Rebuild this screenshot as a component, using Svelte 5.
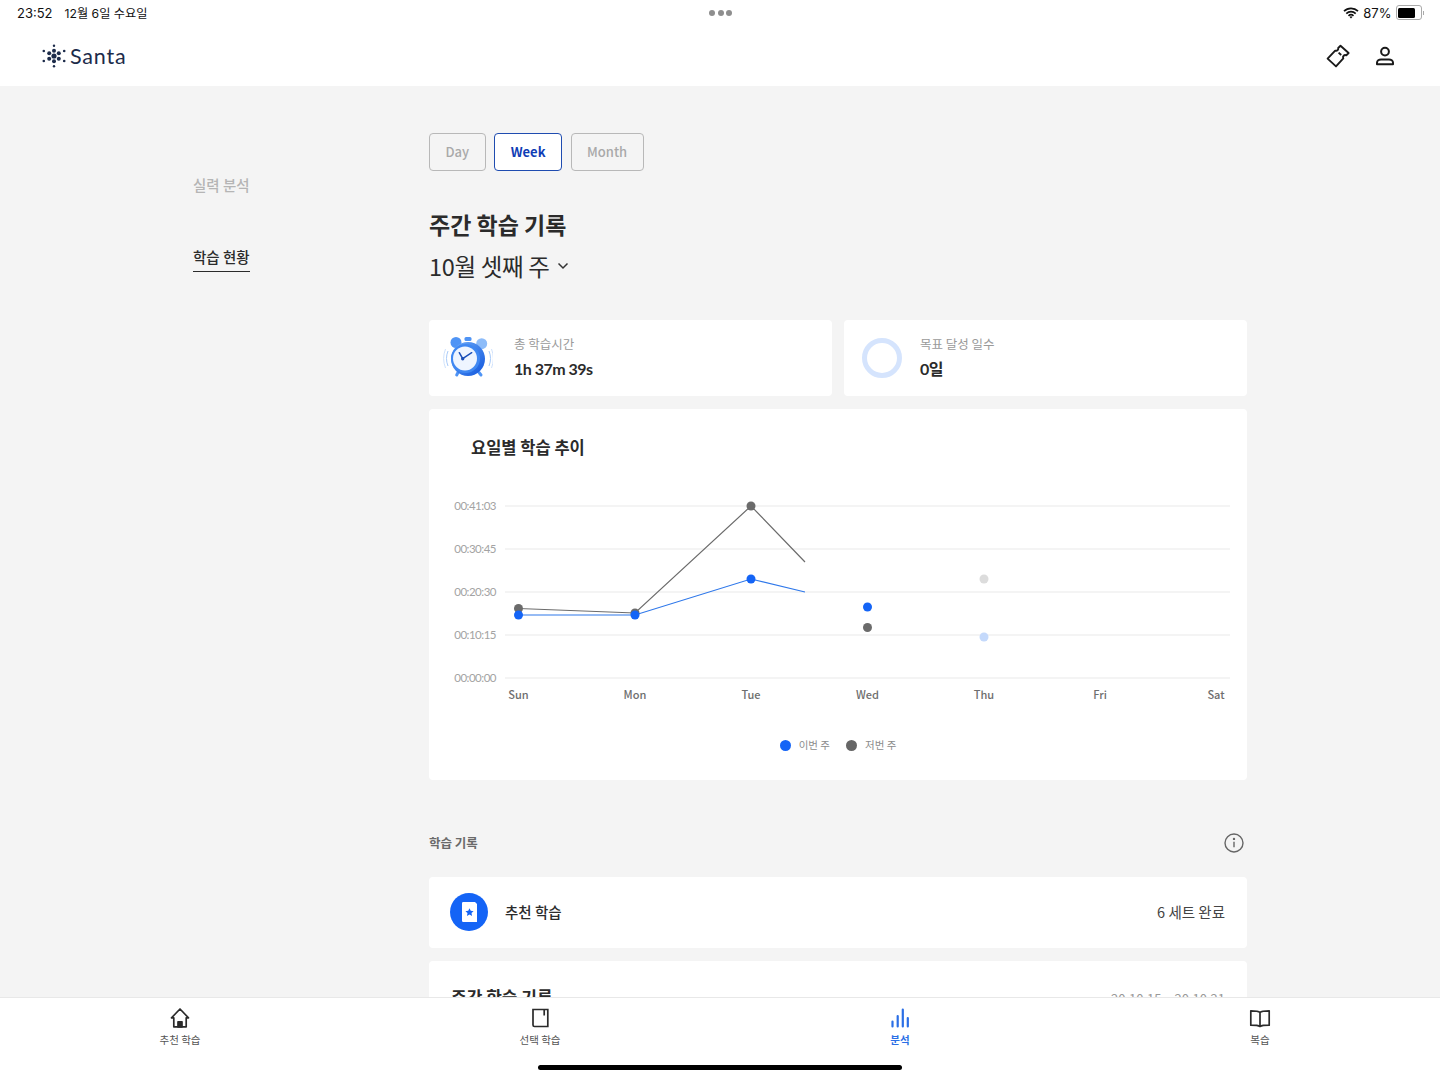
<script>
    const ranges = ['Day', 'Week', 'Month'];
    const ticks = [
        { label: '00:41:03', y: 20 },
        { label: '00:30:45', y: 63 },
        { label: '00:20:30', y: 106 },
        { label: '00:10:15', y: 149 },
        { label: '00:00:00', y: 192 }
    ];
    const days = [
        { label: 'Sun', x: 89.5 },
        { label: 'Mon', x: 206 },
        { label: 'Tue', x: 322 },
        { label: 'Wed', x: 438.5 },
        { label: 'Thu', x: 555 },
        { label: 'Fri', x: 671 },
        { label: 'Sat', x: 787 }
    ];

    const toPoints = (list) => list.map(p => p.join(',')).join(' ');

    const lastWeek = [[89.5, 122.5], [206, 127], [322, 20], [376, 76]];
    const thisWeek = [[89.5, 129], [206, 129], [322, 93], [376, 106]];
</script>

<div class="page">
    <header class="top">
        <div class="status">
            <div class="status-left"><span>23:52</span><span class="date">12월 6일 수요일</span></div>
            <div class="dots"><i></i><i></i><i></i></div>
            <div class="status-right">
                <svg width="16" height="12" viewBox="0 0 16 12">
                    <path d="M1 4.200a10 10 0 0 1 14 0M3.300 6.600a6.800 6.800 0 0 1 9.400 0M5.500 8.800a3.600 3.600 0 0 1 5 0" fill="none" stroke="#111" stroke-width="1.700"/>
                    <path d="M6.600 9.900a2 2 0 0 1 2.800 0L8 11.400z" fill="#111"/>
                </svg>
                <span>87%</span>
                <div class="battery"><b></b></div>
                <div class="battery-cap"></div>
            </div>
        </div>
        <div class="brand-row">
            <div class="brand">
                <svg width="26" height="26" viewBox="0 0 26 26" fill="#1c2b4a">
                    <circle cx="13" cy="13" r="2.600"/>
                    <circle cx="13" cy="7.800" r="2"/><circle cx="13" cy="18.200" r="2"/>
                    <circle cx="13" cy="2.800" r="1.200"/><circle cx="13" cy="23.200" r="1.200"/>
                    <circle cx="8.200" cy="10.200" r="2"/><circle cx="17.800" cy="10.200" r="2"/>
                    <circle cx="8.200" cy="15.800" r="2"/><circle cx="17.800" cy="15.800" r="2"/>
                    <circle cx="2.800" cy="8" r="1.300"/><circle cx="23.200" cy="8" r="1.300"/>
                    <circle cx="2.800" cy="18" r="1.300"/><circle cx="23.200" cy="18" r="1.300"/>
                </svg>
                <span>Santa</span>
            </div>
            <div class="top-icons">
                <svg width="24" height="24" viewBox="0 0 24 24" fill="none" stroke="#1a1a1a" stroke-width="1.900" stroke-linejoin="round">
                    <path d="M14.500 1.800 22.600 9l-2.300 2.400a2.200 2.200 0 0 0-3 3L10 22.400 1.600 14.600l7.600-8a2.200 2.200 0 0 0 3-2.600z"/>
                    <path d="m12.600 8.600 2.600 2.400"/>
                </svg>
                <svg width="24" height="24" viewBox="0 0 24 24" fill="none" stroke="#1a1a1a" stroke-width="2">
                    <circle cx="12" cy="7.600" r="3.900"/>
                    <path d="M4 20.200v-1.400c0-2 2-3.400 4-3.400h8c2 0 4 1.400 4 3.400v1.400z" stroke-linejoin="round"/>
                </svg>
            </div>
        </div>
    </header>

    <main class="body">
        <nav class="side">
            <a class="side-link" href="#skill">실력 분석</a>
            <a class="side-link active" href="#status">학습 현황</a>
        </nav>

        <section class="content">
            <div class="ranges">
                {#each ranges as range}
                    <button class:on={range === 'Week'}>{range}</button>
                {/each}
            </div>

            <h1>주간 학습 기록</h1>
            <div class="week">
                <span>10월 셋째 주</span>
                <svg width="12" height="8" viewBox="0 0 12 8" fill="none" stroke="#333" stroke-width="1.500"><path d="m1.500 1.500 4.500 4.500 4.500-4.500"/></svg>
            </div>

            <div class="stats">
                <div class="card stat">
                    <svg class="clock" width="50" height="44" viewBox="0 0 50 44">
                        <defs>
                            <linearGradient id="ring" x1="0" y1="0" x2="1" y2="1">
                                <stop offset="0" stop-color="#6fadf9"/>
                                <stop offset="1" stop-color="#0f55dd"/>
                            </linearGradient>
                        </defs>
                        <path d="M2.500 13a26 26 0 0 0 0 19M48.500 13a26 26 0 0 1 0 19" fill="none" stroke="#cfe2fc" stroke-width="1"/>
                        <path d="M5 15a20 20 0 0 0 0 15M46 15a20 20 0 0 1 0 15" fill="none" stroke="#a9cbf9" stroke-width="1"/>
                        <circle cx="13" cy="6.500" r="5.500" fill="#4f94f5"/>
                        <circle cx="38.700" cy="7.700" r="5.500" fill="#8dbcf9"/>
                        <rect x="21.500" y="1" width="7" height="4" rx="1.500" fill="#4f94f5"/>
                        <path d="m15 36.500-1.300 2.500M36 36.500l2 2.500" stroke-width="3" stroke-linecap="round" stroke="#4f94f5"/>
                        <circle cx="25" cy="23" r="17" fill="url(#ring)"/>
                        <circle cx="22.500" cy="22.500" r="14.500" fill="#3f88f2"/>
                        <circle cx="22" cy="22.500" r="12" fill="#eef5ff"/>
                        <path d="m19.700 22.700-3.400-6M19.700 22.700l9-6" stroke="#1a4fb8" stroke-width="1.500" stroke-linecap="round"/>
                        <circle cx="19.700" cy="22.700" r="1.700" fill="#1a4fb8"/>
                    </svg>
                    <div class="stat-text">
                        <span class="stat-label">총 학습시간</span>
                        <strong>1h 37m 39s</strong>
                    </div>
                </div>
                <div class="card stat goal">
                    <div class="ring"></div>
                    <div class="stat-text">
                        <span class="stat-label">목표 달성 일수</span>
                        <strong>0일</strong>
                    </div>
                </div>
            </div>

            <div class="card chart">
                <h2>요일별 학습 추이</h2>
                <svg class="plot" width="818" height="215" viewBox="0 0 818 215">
                    {#each ticks as tick}
                        <line x1="76" x2="801" y1={tick.y} y2={tick.y} stroke="#e9e9e9" />
                        <text class="tick" x="67" y={tick.y + 4} text-anchor="end">{tick.label}</text>
                    {/each}
                    {#each days as day}
                        <text class="day" x={day.x} y="213" text-anchor="middle">{day.label}</text>
                    {/each}
                    <polyline points={toPoints(lastWeek)} fill="none" stroke="#6b6b6b" stroke-width="1.200" />
                    <polyline points={toPoints(thisWeek)} fill="none" stroke="#2f78ea" stroke-width="1.200" />
                    {#each lastWeek.slice(0, 3) as p}
                        <circle cx={p[0]} cy={p[1]} r="4.500" fill="#6b6b6b" />
                    {/each}
                    {#each thisWeek.slice(0, 3) as p}
                        <circle cx={p[0]} cy={p[1]} r="4.500" fill="#1464f6" />
                    {/each}
                    <circle cx="438.500" cy="121" r="4.500" fill="#1464f6" />
                    <circle cx="438.500" cy="141.500" r="4.500" fill="#6b6b6b" />
                    <circle cx="555" cy="93" r="4.500" fill="#dcdcdc" />
                    <circle cx="555" cy="151" r="4.500" fill="#c4d9fb" />
                </svg>
                <div class="legend">
                    <span class="key"><i class="blue"></i>이번 주</span>
                    <span class="key"><i class="gray"></i>저번 주</span>
                </div>
            </div>

            <div class="log-head">
                <h3>학습 기록</h3>
                <svg width="20" height="20" viewBox="0 0 20 20" fill="none" stroke="#666" stroke-width="1.400">
                    <circle cx="10" cy="10" r="9"/>
                    <path d="M10 8.800v5.400"/>
                    <circle cx="10" cy="5.900" r="0.500" fill="#666"/>
                </svg>
            </div>

            <div class="card log-row">
                <div class="log-icon">
                    <svg width="15" height="20" viewBox="0 0 15 20">
                        <path d="M0 1.200A1.200 1.200 0 0 1 1.200 0H13l2 2v18H1.200A1.200 1.200 0 0 1 0 18.800z" fill="#fff"/>
                        <path d="m7.500 6.200 1.250 2.600 2.850.35-2.100 1.950.55 2.850-2.550-1.400-2.550 1.400.55-2.850-2.100-1.950 2.850-.35z" fill="#1464f6"/>
                    </svg>
                </div>
                <span class="log-name">추천 학습</span>
                <span class="log-count">6 세트 완료</span>
            </div>

            <div class="card week-row">
                <span class="week-name">주간 학습 기록</span>
                <span class="week-date">20.10.15 ~ 20.10.21</span>
            </div>
        </section>
    </main>

    <footer class="tabs">
        <div class="tab">
            <svg width="24" height="24" viewBox="0 0 24 24" fill="none" stroke="#2b2b2b" stroke-width="1.700" stroke-linejoin="round">
                <path d="M12 3 3.500 11.800h2.300v9h12.400v-9h2.300z"/>
                <path d="M10 20.800v-5h4v5z" fill="#2b2b2b"/>
            </svg>
            <span>추천 학습</span>
        </div>
        <div class="tab">
            <svg width="24" height="24" viewBox="0 0 24 24" fill="none" stroke="#2b2b2b" stroke-width="1.700">
                <path d="M5 3.500h14.800v17H6.500A1.500 1.500 0 0 1 5 19z"/>
                <path d="M16.200 3.500v6" />
            </svg>
            <span>선택 학습</span>
        </div>
        <div class="tab current">
            <svg width="24" height="24" viewBox="0 0 24 24" fill="none" stroke="#2b6fe6" stroke-width="2.200" stroke-linecap="round">
                <path d="M4.500 15.500v5M9.700 10v10.500M14.800 3.500v17M19.800 12v8.500"/>
            </svg>
            <span>분석</span>
        </div>
        <div class="tab">
            <svg width="24" height="24" viewBox="0 0 24 24" fill="none" stroke="#2b2b2b" stroke-width="1.700" stroke-linejoin="round">
                <path d="M12 6.500C10.500 5 8 4.800 2.800 4.800v14.400c5 0 7.500.2 9.200 1.300 1.700-1.100 4.200-1.300 9.200-1.300V4.800C16 4.800 13.500 5 12 6.500zM12 6.500v14"/>
            </svg>
            <span>복습</span>
        </div>
        <div class="home-bar"></div>
    </footer>
</div>

<style>
    :global(body) {
        margin: 0;
        background: #f4f4f4;
    }

    .page {
        height: 1079px;
        display: flex;
        flex-direction: column;
        overflow: hidden;
        font-family: "Noto Sans CJK KR", "Noto Sans", sans-serif;
        color: #2b2b2b;
    }

    .top {
        height: 86px;
        flex: none;
        background: #fff;
    }

    .status {
        height: 25px;
        padding: 0 16px 0 17px;
        display: grid;
        grid-template-columns: 1fr auto 1fr;
        align-items: center;
        font-family: Inter, "Noto Sans CJK KR", sans-serif;
        font-size: 13px;
        color: #111;
    }

    .status-left {
        display: flex;
        align-items: baseline;
        gap: 12px;
    }

    .date {
        font-size: 12.200px;
    }

    .dots {
        display: flex;
        gap: 2.500px;
    }

    .dots i {
        width: 6px;
        height: 6px;
        border-radius: 50%;
        background: #8e8e8e;
    }

    .status-right {
        display: flex;
        align-items: center;
        justify-content: flex-end;
        gap: 4px;
    }

    .battery {
        width: 21px;
        height: 10px;
        margin-left: 0;
        padding: 1.500px;
        border: 1px solid #aaa;
        border-radius: 3px;
    }

    .battery b {
        display: block;
        width: 83%;
        height: 100%;
        border-radius: 1.500px;
        background: #000;
    }

    .battery-cap {
        width: 1.500px;
        height: 4px;
        margin-left: -3px;
        background: #aaa;
    }

    .brand-row {
        height: 61px;
        padding: 0 43px 0 41px;
        display: flex;
        align-items: center;
        justify-content: space-between;
    }

    .brand {
        display: flex;
        align-items: center;
        gap: 3px;
        font-family: Lato, sans-serif;
        font-size: 21.500px;
        font-weight: 400;
        letter-spacing: 0.8px;
        color: #1c2b4a;
    }

    .top-icons {
        display: flex;
        gap: 23px;
    }

    .body {
        flex: 1;
        min-height: 0;
        overflow: hidden;
        display: grid;
        grid-template-columns: 193px 236px 818px;
    }

    .side {
        grid-column: 2;
        padding-top: 88px;
        display: flex;
        flex-direction: column;
        align-items: flex-start;
        gap: 46px;
    }

    .side-link {
        padding-bottom: 3px;
        font-size: 14.500px;
        line-height: 22px;
        font-weight: 500;
        color: #b5b5b5;
        text-decoration: none;
        border-bottom: 1.500px solid transparent;
    }

    .side-link.active {
        color: #2b2b2b;
        border-bottom-color: #2b2b2b;
    }

    .content {
        grid-column: 3;
        padding-top: 47px;
    }

    .ranges {
        display: flex;
        gap: 8.500px;
    }

    button {
        height: 38px;
        padding: 0 15.500px 2px;
        font: 500 13px "Noto Sans CJK KR", sans-serif;
        color: #a9a9a9;
        background: transparent;
        border: 1.500px solid #b8b8b8;
        border-radius: 4px;
    }

    button.on {
        font-weight: 700;
        color: #0f3db5;
        border-color: #1f4cb0;
        background: #fff;
    }

    h1 {
        margin: 35px 0 0;
        font-size: 23px;
        line-height: 36px;
        font-weight: 700;
    }

    .week {
        margin-top: 6px;
        display: flex;
        align-items: center;
        gap: 7px;
        font-size: 23.500px;
        line-height: 36px;
        font-weight: 400;
        letter-spacing: -0.3px;
    }

    .stats {
        margin-top: 36px;
        display: grid;
        grid-template-columns: 1fr 1fr;
        gap: 12px;
    }

    .card {
        background: #fff;
        border-radius: 4px;
    }

    .stat {
        height: 76px;
        display: flex;
        align-items: center;
        padding-left: 14px;
        gap: 21px;
    }

    .stat.goal {
        padding-left: 18px;
        gap: 18px;
    }

    .ring {
        width: 40px;
        height: 40px;
        box-sizing: border-box;
        border: 5px solid #d5e4fd;
        border-radius: 50%;
    }

    .stat-text {
        display: flex;
        flex-direction: column;
        gap: 3px;
        margin-top: -1px;
    }

    .stat-label {
        font-size: 12.500px;
        line-height: 20px;
        color: #9a9a9a;
    }

    .stat-text strong {
        font-family: Lato, "Noto Sans CJK KR", sans-serif;
        font-size: 16px;
        line-height: 24px;
        font-weight: 700;
        letter-spacing: -0.5px;
    }

    .chart {
        margin-top: 13px;
        height: 371px;
    }

    h2 {
        margin: 0;
        padding: 25px 0 0 42px;
        font-size: 16.500px;
        line-height: 26px;
        font-weight: 700;
    }

    .plot {
        display: block;
        margin-top: 26px;
    }

    .plot text {
        font-family: "Noto Sans CJK KR", sans-serif;
    }

    .plot .tick {
        font-family: Lato, sans-serif;
        font-size: 11.500px;
        letter-spacing: -0.5px;
        fill: #a3a3a3;
    }

    .day {
        font-size: 11px;
        font-weight: 500;
        fill: #6e6e6e;
    }

    .legend {
        margin-top: 36px;
        display: flex;
        justify-content: center;
        gap: 16px;
    }

    .key {
        display: flex;
        align-items: center;
        gap: 8px;
        font-size: 10.500px;
        line-height: 16px;
        color: #8c8c8c;
    }

    .key i {
        width: 11px;
        height: 11px;
        border-radius: 50%;
    }

    .key i.blue {
        background: #1464f6;
    }

    .key i.gray {
        background: #666;
    }

    .log-head {
        margin-top: 52px;
        height: 22px;
        padding-right: 3px;
        display: flex;
        align-items: center;
        justify-content: space-between;
    }

    h3 {
        margin: 0;
        padding-bottom: 1px;
        font-size: 12.500px;
        font-weight: 700;
        color: #6a6a6a;
    }

    .log-row {
        margin-top: 23px;
        height: 71px;
        padding: 0 22px 0 21px;
        display: flex;
        align-items: center;
    }

    .log-icon {
        width: 38px;
        height: 38px;
        margin: 0 17px 1px 0;
        border-radius: 50%;
        background: #1464f6;
        display: flex;
        align-items: center;
        justify-content: center;
    }

    .log-name {
        flex: 1;
        padding-bottom: 2px;
        font-size: 14.500px;
        font-weight: 500;
    }

    .log-count {
        padding-bottom: 2px;
        font-size: 14.500px;
        color: #444;
    }

    .week-row {
        margin-top: 13px;
        height: 80px;
        padding: 23px 22px 0;
        display: flex;
        align-items: baseline;
        justify-content: space-between;
        box-sizing: border-box;
    }

    .week-name {
        font-size: 17px;
        font-weight: 700;
    }

    .week-date {
        font-size: 13px;
        color: #9a9a9a;
    }

    .tabs {
        position: relative;
        height: 82px;
        flex: none;
        box-sizing: border-box;
        border-top: 1px solid #e8e8e8;
        background: #fff;
        display: grid;
        grid-template-columns: repeat(4, 1fr);
    }

    .tab {
        padding-top: 8px;
        display: flex;
        flex-direction: column;
        align-items: center;
        gap: 2px;
        font-size: 10.500px;
        line-height: 16px;
        color: #555;
    }

    .tab.current {
        font-weight: 700;
        color: #2b6fe6;
    }

    .home-bar {
        position: absolute;
        left: 538px;
        bottom: 9px;
        width: 364px;
        height: 5px;
        border-radius: 3px;
        background: #000;
    }
</style>
